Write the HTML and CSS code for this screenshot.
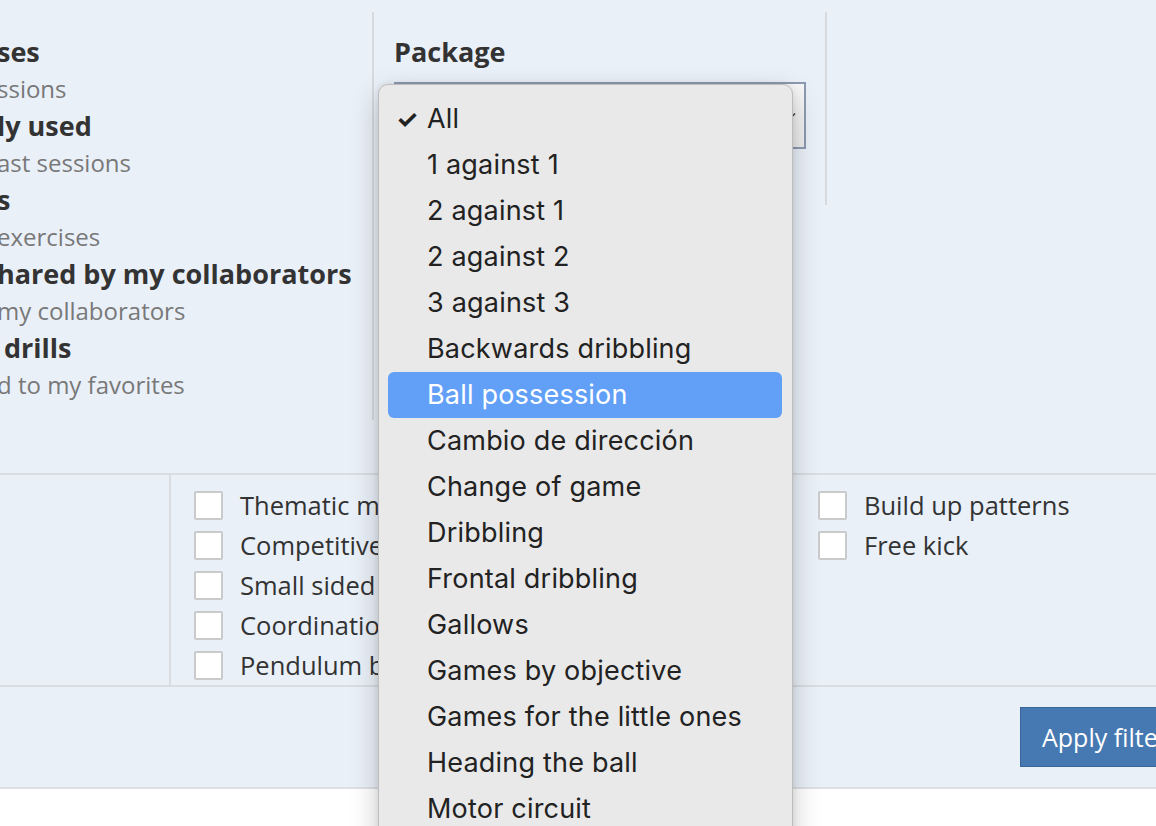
FILE: index.html
```html
<!DOCTYPE html>
<html lang="en">
<head>
<meta charset="utf-8">
<title>Filters</title>
<link rel="stylesheet" href="styles.css">
</head>
<body>
<div class="panel">
  <section class="top">
    <div class="col-origin">
      <ul class="origin-list">
        <li><span class="opt-title">ses</span><span class="opt-sub">ssions</span></li>
        <li><span class="opt-title">ly used</span><span class="opt-sub">ast sessions</span></li>
        <li><span class="opt-title">s</span><span class="opt-sub">exercises</span></li>
        <li><span class="opt-title">hared by my collaborators</span><span class="opt-sub">my collaborators</span></li>
        <li><span class="opt-title">&nbsp;drills</span><span class="opt-sub">d to my favorites</span></li>
      </ul>
    </div>
    <div class="col-package">
      <label class="field-label">Package</label>
      <div class="select-box">
        <svg class="select-arrow" width="12" height="8" viewBox="0 0 12 8"><path d="M1 1.5 6 6.5 11 1.5" fill="none" stroke="#444" stroke-width="1.6"/></svg>
      </div>
    </div>
    <div class="col-empty"></div>
  </section>

  <section class="middle">
    <div class="mid-spacer"></div>
    <div class="check-cols">
      <ul class="check-col">
        <li><span class="box"></span>Thematic matches</li>
        <li><span class="box"></span>Competitive games</li>
        <li><span class="box"></span>Small sided games</li>
        <li><span class="box"></span>Coordination</li>
        <li><span class="box"></span>Pendulum ball</li>
      </ul>
      <ul class="check-col">
        <li><span class="box"></span>Finishing</li>
        <li><span class="box"></span>Passing</li>
        <li><span class="box"></span>Pressing</li>
        <li><span class="box"></span>Rondo</li>
        <li><span class="box"></span>Warm up</li>
      </ul>
      <ul class="check-col">
        <li><span class="box"></span>Build up patterns</li>
        <li><span class="box"></span>Free kick</li>
      </ul>
    </div>
  </section>

  <section class="footer">
    <button class="apply-btn">Apply filters</button>
  </section>
</div>

<div class="dropdown">
  <ul class="menu">
    <li class="checked"><span class="tick">✓</span>All</li>
    <li>1 against 1</li>
    <li>2 against 1</li>
    <li>2 against 2</li>
    <li>3 against 3</li>
    <li>Backwards dribbling</li>
    <li class="hl">Ball possession</li>
    <li>Cambio de dirección</li>
    <li>Change of game</li>
    <li>Dribbling</li>
    <li>Frontal dribbling</li>
    <li>Gallows</li>
    <li>Games by objective</li>
    <li>Games for the little ones</li>
    <li>Heading the ball</li>
    <li>Motor circuit</li>
  </ul>
</div>
</body>
</html>
```

FILE: styles.css
```css
html, body {
  margin: 0;
  padding: 0;
  background: #ffffff;
  overflow: hidden;
  height: 826px;
}

body {
  font-family: "Open Sans", "Liberation Sans", sans-serif;
  color: #333;
  position: relative;
}

ul {
  list-style: none;
  margin: 0;
  padding: 0;
}

.panel {
  width: 1240px;
  background: #eaf0f8;
  border-bottom: 2px solid #dcdfe3;
}

/* ---------- top ---------- */
.top {
  display: flex;
  height: 475px;
  border-bottom: 2px solid #d9dde2;
  box-sizing: border-box;
}

.col-origin {
  width: 372px;
  margin-top: 12px;
  height: 408px;
  border-right: 2px solid #d6dadf;
  overflow: hidden;
}

.origin-list {
  margin-left: -3px;
  padding-top: 21px;
}

.origin-list li {
  display: flex;
  flex-direction: column;
  white-space: nowrap;
}

.opt-title {
  font-size: 27px;
  font-weight: 700;
  line-height: 37px;
  color: #333;
}

.opt-sub {
  font-size: 24px;
  line-height: 37px;
  color: #787878;
}

.col-package {
  width: 453px;
  margin-top: 12px;
  height: 193px;
  border-right: 2px solid #d6dadf;
  padding: 21px 0 0 20px;
  box-sizing: border-box;
  display: flex;
  flex-direction: column;
}

.field-label {
  font-size: 27px;
  font-weight: 700;
  line-height: 37px;
  color: #333;
}

.select-box {
  margin-top: 12px;
  width: 412px;
  height: 67px;
  box-sizing: border-box;
  border: 2px solid #8e9ab2;
  background: linear-gradient(#f7f7f7, #ececec);
  display: flex;
  align-items: center;
  justify-content: flex-end;
  padding-right: 8px;
}

.col-empty {
  flex: 1;
}

/* ---------- middle ---------- */
.middle {
  display: flex;
  height: 212px;
  border-bottom: 2px solid #d9dde2;
  box-sizing: border-box;
}

.mid-spacer {
  width: 169px;
  border-right: 2px solid #d9dde2;
}

.check-cols {
  display: flex;
  padding: 10px 0 0 23px;
}

.check-col {
  width: 312px;
}

.check-col li {
  display: flex;
  align-items: center;
  height: 40px;
  font-size: 25.5px;
  color: #333;
  white-space: nowrap;
}

.box {
  width: 29px;
  height: 29px;
  box-sizing: border-box;
  border: 2px solid #cacaca;
  border-radius: 2px;
  background: #fff;
  margin-right: 17px;
  flex: none;
}

/* ---------- footer ---------- */
.footer {
  height: 100px;
  display: flex;
  justify-content: flex-end;
  align-items: flex-start;
  padding: 20px 30px 0 0;
  box-sizing: border-box;
}

.apply-btn {
  width: 190px;
  height: 60px;
  padding: 0 0 0 21px;
  text-align: left;
  font-family: "Open Sans", "Liberation Sans", sans-serif;
  font-size: 25px;
  color: #fff;
  background: #4679b1;
  border: 1px solid #3a679b;
  border-radius: 0;
}

/* ---------- dropdown (overlay) ---------- */
.dropdown {
  position: absolute;
  left: 378px;
  top: 84px;
  width: 415px;
  height: 780px;
  box-sizing: border-box;
  background: #e9e9e9;
  border: 1px solid #bdbdbd;
  border-radius: 10px;
  box-shadow: 0 10px 28px rgba(0, 0, 0, 0.22), 0 0 6px rgba(0, 0, 0, 0.08);
  padding: 11px 10px 0 9px;
  font-family: Inter, "Noto Sans", sans-serif;
}

.menu li {
  height: 46px;
  line-height: 46px;
  padding-left: 39px;
  font-size: 27px;
  letter-spacing: 0.2px;
  color: #222;
  border-radius: 6px;
  position: relative;
  white-space: nowrap;
}

.menu li.hl {
  background: #62a0f8;
  color: #fff;
}

.tick {
  position: absolute;
  left: 8px;
  top: 0;
  font-size: 25px;
  font-weight: 700;
  letter-spacing: 0;
  color: #222;
}
```
